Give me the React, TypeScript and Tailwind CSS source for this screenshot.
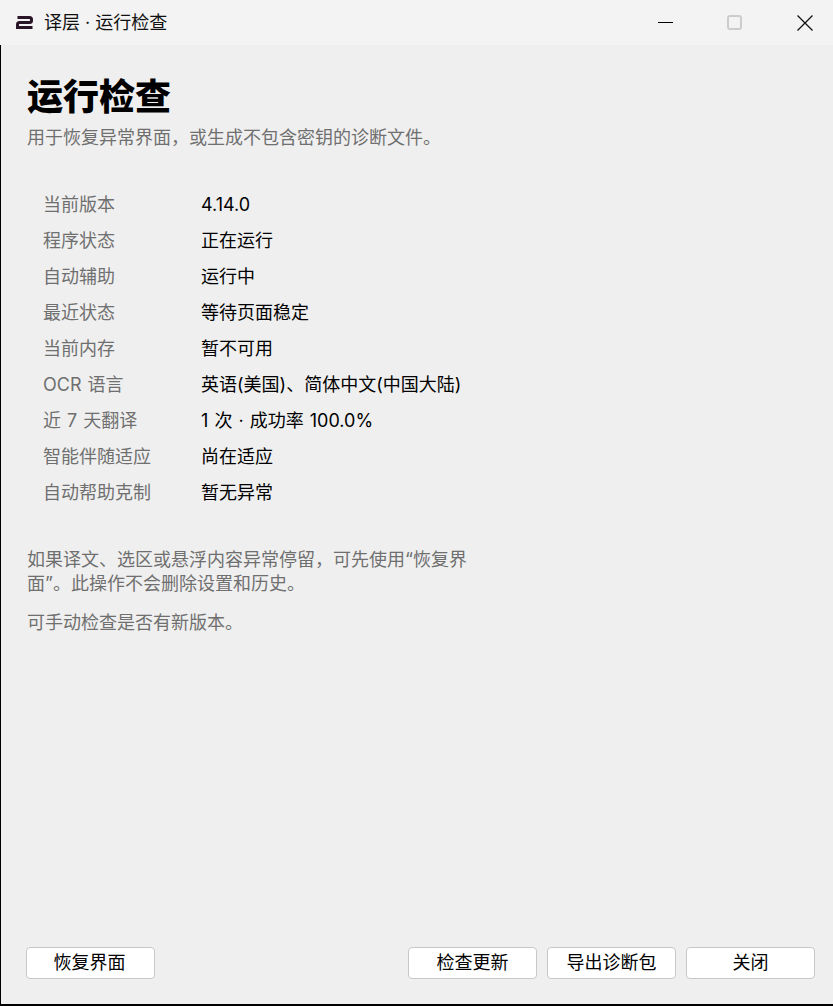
const rows = [
  ['当前版本', '4.14.0'],
  ['程序状态', '正在运行'],
  ['自动辅助', '运行中'],
  ['最近状态', '等待页面稳定'],
  ['当前内存', '暂不可用'],
  ['OCR 语言', '英语(美国)、简体中文(中国大陆)'],
  ['近 7 天翻译', '1 次 · 成功率 100.0%'],
  ['智能伴随适应', '尚在适应'],
  ['自动帮助克制', '暂无异常'],
];

function ActionButton({ label, width }: { label: string; width: string }) {
  return (
    <button className={`${width} h-[32px] rounded-[4px] border border-[#c8c8c8] bg-white text-[18px] leading-none text-black`}>
      {label}
    </button>
  );
}

export default function App() {
  return (
    <div
      className="flex h-[1006px] w-[833px] flex-col overflow-hidden bg-[#efefef]"
      style={{ fontFamily: 'Inter, "Noto Sans CJK SC", sans-serif' }}
    >
      {/* 标题栏 */}
      <div className="flex h-[45px] shrink-0 items-center bg-[#f3f3f3]">
        <svg className="ml-[16px] h-[13px] w-[17px]" viewBox="0 0 17 13" fill="none" stroke="#2a1428" strokeWidth="3">
          <path d="M1.5 1.6H13.5Q15.5 1.6 15.5 3.6V4.4Q15.5 6.4 13.5 6.4H3.5Q1.5 6.4 1.5 8.4V11.4H16.5" />
        </svg>
        <span className="ml-[11px] text-[18px] text-[#111]">译层 · 运行检查</span>
        <div className="ml-auto flex items-center">
          <div className="h-[1px] w-[15px] bg-black" />
          <div className="ml-[54px] h-[15px] w-[15px] rounded-[3px] border-2 border-[#cccccc]" />
          <svg className="ml-[55px] mr-[20px] h-[16px] w-[16px]" viewBox="0 0 16 16" stroke="#111" strokeWidth="1.3">
            <path d="M0.5 0.5L15.5 15.5M15.5 0.5L0.5 15.5" />
          </svg>
        </div>
      </div>

      {/* 内容 */}
      <div className="flex min-h-0 flex-1 flex-col border-b-2 border-l border-black pb-[25px] pl-[26px] pr-[18px]">
        <h1 className="mt-[27px] text-[36px] leading-[50px] font-extrabold text-black">运行检查</h1>
        <p className="mt-[4px] text-[18px] leading-[24px] text-[#6f6f6f]">用于恢复异常界面，或生成不包含密钥的诊断文件。</p>

        <div className="mt-[36px] flex flex-col pl-[16px] [word-spacing:1px]">
          {rows.map(([label, value]) => (
            <div key={label} className="flex h-[36px] items-center text-[18px]">
              <span className="w-[158px] text-[#6f6f6f]">{label}</span>
              <span className="text-black">{value}</span>
            </div>
          ))}
        </div>

        <p className="mt-[38px] w-[445px] text-[18px] leading-[24px] text-[#6f6f6f]">
          如果译文、选区或悬浮内容异常停留，可先使用“恢复界面”。此操作不会删除设置和历史。
        </p>
        <p className="mt-[15px] text-[18px] leading-[24px] text-[#6f6f6f]">可手动检查是否有新版本。</p>

        <div className="-ml-[1px] mt-auto flex items-center">
          <ActionButton label="恢复界面" width="w-[129px] pr-[2px]" />
          <div className="ml-auto flex gap-[10px]">
            <ActionButton label="检查更新" width="w-[129px]" />
            <ActionButton label="导出诊断包" width="w-[129px]" />
            <ActionButton label="关闭" width="w-[129px]" />
          </div>
        </div>
      </div>
    </div>
  );
}
